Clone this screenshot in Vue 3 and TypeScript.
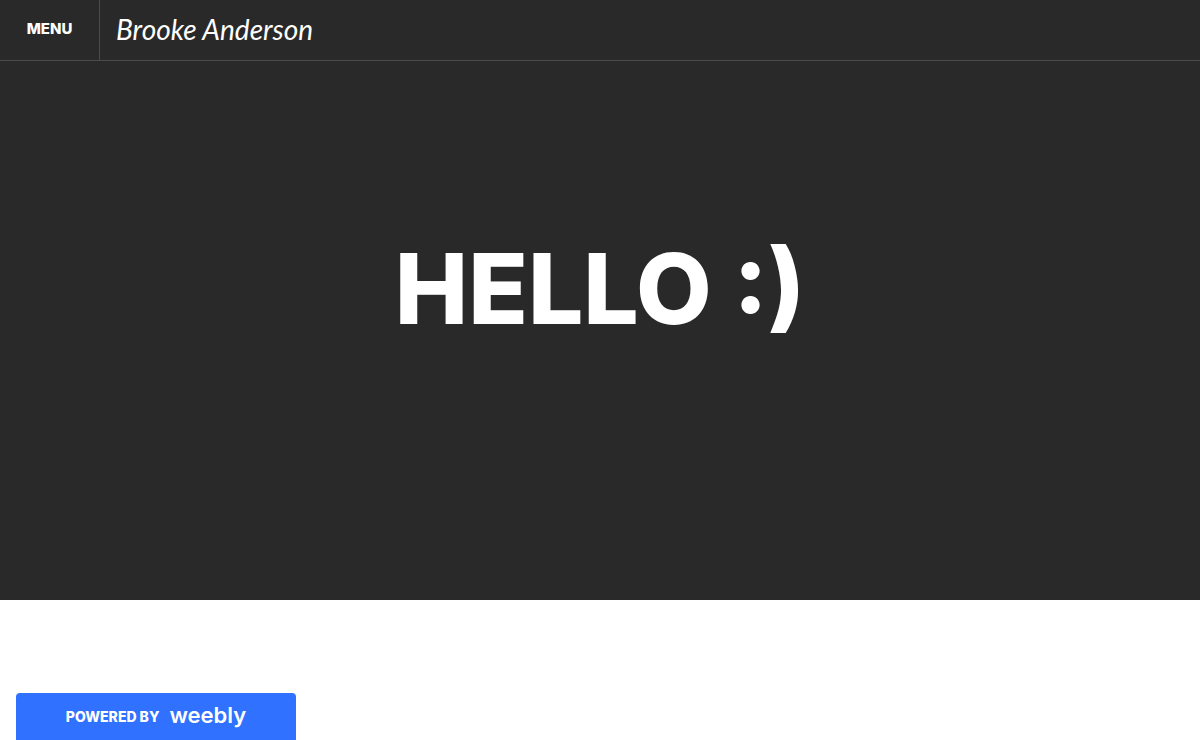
<script setup lang="ts">
import { ref } from 'vue'

const menuOpen = ref(false)
const siteTitle = 'Brooke Anderson'
const headline = 'HELLO :)'
</script>

<template>
  <div class="page">
    <header class="topbar">
      <button class="menu" type="button" :aria-expanded="menuOpen" @click="menuOpen = !menuOpen">MENU</button>
      <a class="brand" href="#">{{ siteTitle }}</a>
    </header>
    <main class="hero">
      <h1>{{ headline }}</h1>
    </main>
    <a class="badge" href="#">
      <span class="powered">POWERED BY</span>
      <span class="wordmark">weebly</span>
    </a>
  </div>
</template>

<style>
body {
  margin: 0;
  background: #fff;
}
</style>

<style scoped>
.page {
  display: flex;
  flex-direction: column;
  min-height: 100vh;
  font-family: Inter, "Liberation Sans", sans-serif;
  color: #fff;
}
.topbar {
  display: flex;
  align-items: stretch;
  height: 60px;
  background: #292929;
  border-bottom: 1px solid #4b4b4b;
}
.menu {
  width: 100px;
  padding: 0 0 2px;
  border: 0;
  border-right: 1px solid #4b4b4b;
  background: transparent;
  color: #fff;
  font: 800 15px/20px Inter, "Liberation Sans", sans-serif;
  cursor: pointer;
}
.brand {
  display: flex;
  align-items: center;
  padding: 0 16px 2px;
  color: #fff;
  font: italic 400 28px/40px Lato, "Liberation Sans", sans-serif;
  text-decoration: none;
}
.hero {
  display: flex;
  align-items: center;
  justify-content: center;
  height: calc(100vh - 201px);
  padding-bottom: 84px;
  box-sizing: border-box;
  background: #292929;
}
h1 {
  margin: 0;
  font-size: 98px;
  line-height: 120px;
  font-weight: 800;
}
.badge {
  position: fixed;
  left: 16px;
  bottom: 0;
  display: flex;
  align-items: center;
  justify-content: center;
  gap: 10px;
  width: 280px;
  height: 47px;
  border-radius: 4px 4px 0 0;
  background: #3072ff;
  color: #fff;
  text-decoration: none;
}
.powered {
  font-size: 14px;
  line-height: 20px;
  font-weight: 800;
}
.wordmark {
  padding-bottom: 4px;
  font-size: 22px;
  line-height: 28px;
  font-weight: 600;
}
</style>
